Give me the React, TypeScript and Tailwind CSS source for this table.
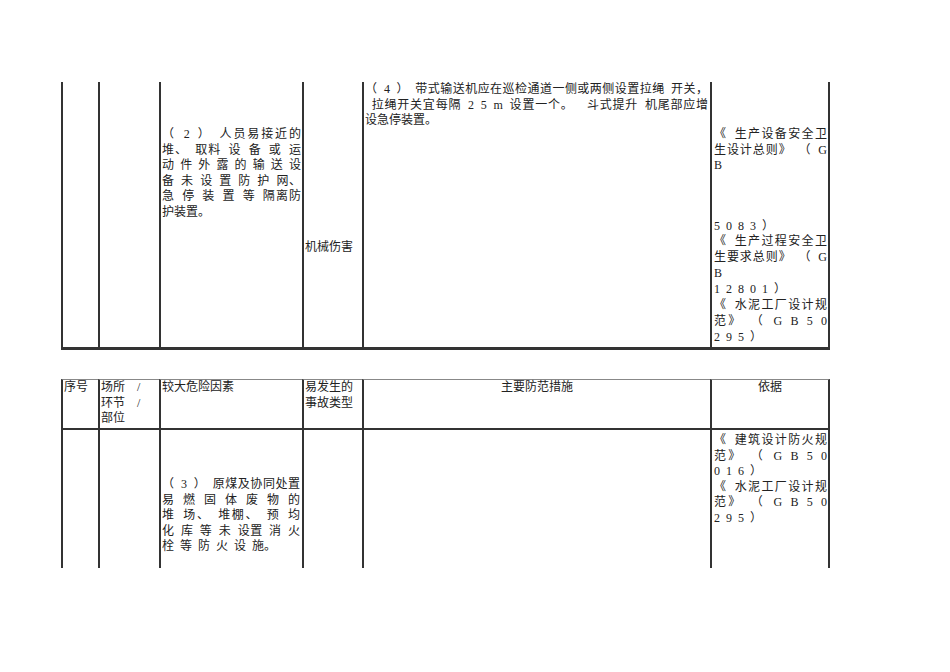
import React from "react";

type LineProps = { t: string; j?: boolean };
const L = ({ t, j }: LineProps) => (
  <div className={j ? "text-justify [text-align-last:justify]" : ""}>{t}</div>
);

const cell = "border-l-2 border-[#333] px-[1px]";

export default function App() {
  return (
    <div className="w-[950px] h-[672px] bg-white text-[12px] leading-[15.5px] text-[#222] font-['Liberation_Serif','Noto_Sans_CJK_SC',serif] [word-spacing:3px]">
      <div className="pt-[82px] pl-[61px]">
        {/* top table (continued) */}
        <div className="grid grid-cols-[37px_61px_143px_60px_348px_120px] h-[268px]">
          <div className={`${cell} border-b-[3px]`} />
          <div className={`${cell} border-b-[3px]`} />
          <div className={`${cell} border-b-[3px] pt-[45px]`}>
            <L t="（ 2 ） 人员易接近的" j />
            <L t="堆、 取料 设 备 或 运" j />
            <L t="动 件 外 露 的 输 送 设" j />
            <L t="备 未 设 置 防 护 网、" j />
            <L t="急 停 装 置 等 隔离防" j />
            <L t="护装置。" />
          </div>
          <div className={`${cell} border-b-[3px] pt-[158px]`}>
            <L t="机械伤害" />
          </div>
          <div className={`${cell} border-b-[3px] pt-0 pr-[2px]`}>
            <L t="（ 4 ） 带式输送机应在巡检通道一侧或两侧设置拉绳 开关，" j />
            <L t={"\u00a0拉绳开关宜每隔 2 5 m 设置一个。\u00a0 斗式提升 机尾部应增"} j />
            <L t="设急停装置。" />
          </div>
          <div className={`${cell} border-b-[3px] border-r-2 pt-[45px] pl-[2px]`}>
            <L t="《 生产设备安全卫" j />
            <L t="生设计总则》 （ G" j />
            <L t="B" />
            <div className="mt-[45px] leading-[15.9px]">
              <L t="5 0 8 3 ）" />
              <L t="《 生产过程安全卫" j />
              <L t="生要求总则》 （ G" j />
              <L t="B" />
              <L t="1 2 8 0 1 ）" />
              <L t="《 水泥工厂设计规" j />
              <L t="范》 （ G B 5 0" j />
              <L t="2 9 5 ）" />
            </div>
          </div>
        </div>

        {/* bottom table */}
        <div className="mt-[29px] grid grid-cols-[37px_61px_143px_60px_348px_120px]">
          <div className={`${cell} h-[51px] border-t border-t-[#888] border-b-2`}>
            <L t="序号" />
          </div>
          <div className={`${cell} h-[51px] border-t border-t-[#888] border-b-2`}>
            <L t={"场所\u00a0 /"} />
            <L t={"环节\u00a0 /"} />
            <L t="部位" />
          </div>
          <div className={`${cell} h-[51px] border-t border-t-[#888] border-b-2`}>
            <L t="较大危险因素" />
          </div>
          <div className={`${cell} h-[51px] border-t border-t-[#888] border-b-2`}>
            <L t="易发生的" />
            <L t="事故类型" />
          </div>
          <div className={`${cell} h-[51px] border-t border-t-[#888] border-b-2 text-center`}>
            主要防范措施
          </div>
          <div className={`${cell} h-[51px] border-t border-t-[#888] border-b-2 border-r-2 text-center`}>
            依据
          </div>

          <div className={`${cell} h-[138px]`} />
          <div className={`${cell} h-[138px]`} />
          <div className={`${cell} h-[138px] pt-[47px] pr-[2px]`}>
            <L t="（ 3 ） 原煤及协同处置" j />
            <L t="易 燃 固 体 废 物 的" j />
            <L t="堆 场、 堆棚、 预 均" j />
            <L t="化 库 等 未 设置 消 火" j />
            <L t="栓 等 防 火 设 施。" />
          </div>
          <div className={`${cell} h-[138px]`} />
          <div className={`${cell} h-[138px]`} />
          <div className={`${cell} h-[138px] border-r-2 pt-[3px] pl-[2px]`}>
            <L t="《 建筑设计防火规" j />
            <L t="范》 （ G B 5 0" j />
            <L t="0 1 6 ）" />
            <L t="《 水泥工厂设计规" j />
            <L t="范》 （ G B 5 0" j />
            <L t="2 9 5 ）" />
          </div>
        </div>
      </div>
    </div>
  );
}
